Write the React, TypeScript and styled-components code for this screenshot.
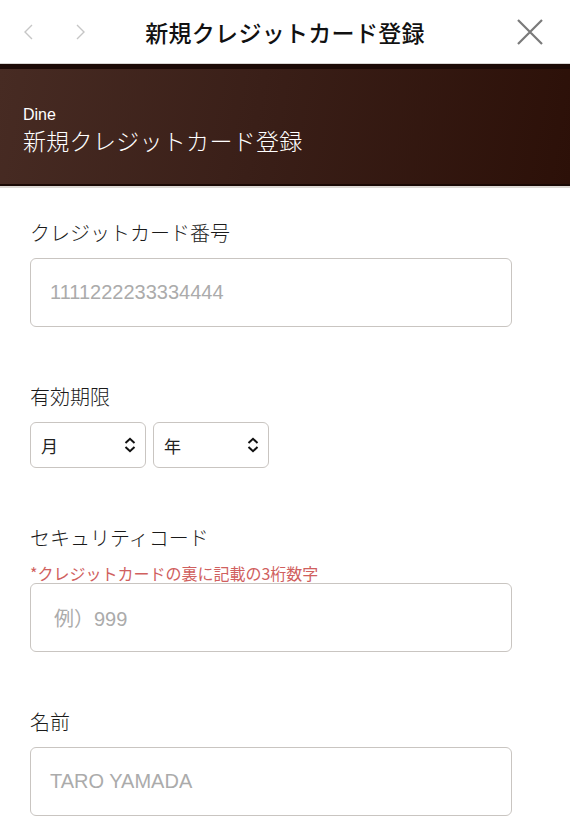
import { FC } from "react";
import styled, { createGlobalStyle } from "styled-components";

const GlobalStyle = createGlobalStyle`
  html, body {
    margin: 0;
    padding: 0;
    background: #ffffff;
  }
  body {
    font-family: "Noto Sans CJK JP", "Noto Sans", "Liberation Sans", sans-serif;
    color: #1a1a1a;
  }
`;

const Page = styled.div`
  width: 570px;
  min-height: 840px;
  background: #fff;
  overflow: hidden;
`;

const NavBar = styled.header`
  height: 63px;
  display: grid;
  grid-template-columns: 110px 1fr 110px;
  align-items: center;
  border-bottom: 1px solid #d8d6d4;
`;

const NavArrows = styled.div`
  display: flex;
  align-items: center;
  gap: 41px;
  padding-left: 22px;
`;

const NavTitle = styled.h1`
  margin: 0;
  text-align: center;
  font-size: 23px;
  font-weight: 500;
  letter-spacing: 0.3px;
  color: #111;
`;

const CloseButton = styled.div`
  display: flex;
  justify-content: flex-end;
  padding-right: 26px;
`;

const Banner = styled.section`
  box-sizing: border-box;
  height: 122px;
  border-top: 5px solid #1c0a06;
  border-bottom: 2px solid #1a0905;
  box-shadow: 0 2px 0 #dcd8d4;
  background: linear-gradient(100deg, #472b23 0%, #3a1f18 45%, #2c1008 100%);
  display: flex;
  flex-direction: column;
  justify-content: center;
  padding: 9px 23px 0;
  color: #fff;
`;

const BannerBrand = styled.div`
  font-family: "Liberation Sans", "Noto Sans", sans-serif;
  font-size: 16px;
  line-height: 18px;
`;

const BannerTitle = styled.div`
  font-size: 23px;
  line-height: 33px;
  letter-spacing: 0.3px;
  font-weight: 300;
`;

const Form = styled.form`
  padding: 34px 58px 0 30px;
  display: flex;
  flex-direction: column;
  gap: 57px;
`;

const Field = styled.div`
  display: flex;
  flex-direction: column;
`;

const Label = styled.label<{ $gap?: number }>`
  font-size: 20px;
  line-height: 26px;
  font-weight: 300;
  color: #1a1a1a;
  margin-bottom: ${(p) => p.$gap ?? 12}px;
`;

const Note = styled.div`
  font-size: 16px;
  line-height: 20px;
  color: #d0605e;
  margin: 0;
`;

const Input = styled.div<{ $indent?: number }>`
  height: 69px;
  box-sizing: border-box;
  border: 1.5px solid #c9c5c1;
  border-radius: 6px;
  display: flex;
  align-items: center;
  padding-left: ${(p) => p.$indent ?? 19}px;
  font-family: "Liberation Sans", "Noto Sans CJK JP", sans-serif;
  font-size: 20px;
  color: #ababab;
`;

const SelectRow = styled.div`
  display: flex;
  gap: 7px;
`;

const Select = styled.div`
  width: 116px;
  height: 46px;
  box-sizing: border-box;
  border: 1.5px solid #c9c5c1;
  border-radius: 6px;
  display: flex;
  align-items: center;
  justify-content: space-between;
  padding: 0 9px 0 10px;
  font-size: 17px;
  color: #222;
`;

const Chevron: FC<{ dir: "left" | "right" }> = ({ dir }) => (
  <svg width="12" height="18" viewBox="0 0 12 18">
    <path
      d={dir === "left" ? "M10 2 L3 9 L10 16" : "M2 2 L9 9 L2 16"}
      fill="none"
      stroke="#c6c6c6"
      strokeWidth="1.4"
    />
  </svg>
);

const CloseIcon = () => (
  <svg width="28" height="28" viewBox="0 0 28 28">
    <path d="M2 2 L26 26 M26 2 L2 26" stroke="#7a7a7a" strokeWidth="2.2" />
  </svg>
);

const UpDown = () => (
  <svg width="12" height="16" viewBox="0 0 12 16">
    <path d="M1.5 6 L6 1.8 L10.5 6 M1.5 10 L6 14.2 L10.5 10" fill="none" stroke="#111" strokeWidth="2" />
  </svg>
);

const App: FC = () => {
  return (
    <Page>
      <GlobalStyle />
      <NavBar>
        <NavArrows>
          <Chevron dir="left" />
          <Chevron dir="right" />
        </NavArrows>
        <NavTitle>新規クレジットカード登録</NavTitle>
        <CloseButton>
          <CloseIcon />
        </CloseButton>
      </NavBar>

      <Banner>
        <BannerBrand>Dine</BannerBrand>
        <BannerTitle>新規クレジットカード登録</BannerTitle>
      </Banner>

      <Form>
        <Field>
          <Label>クレジットカード番号</Label>
          <Input>1111222233334444</Input>
        </Field>

        <Field>
          <Label>有効期限</Label>
          <SelectRow>
            <Select>
              月
              <UpDown />
            </Select>
            <Select>
              年
              <UpDown />
            </Select>
          </SelectRow>
        </Field>

        <Field>
          <Label>セキュリティコード</Label>
          <Note>*クレジットカードの裏に記載の3桁数字</Note>
          <Input $indent={23}>例）999</Input>
        </Field>

        <Field>
          <Label>名前</Label>
          <Input>TARO YAMADA</Input>
        </Field>
      </Form>
    </Page>
  );
};

export default App;
